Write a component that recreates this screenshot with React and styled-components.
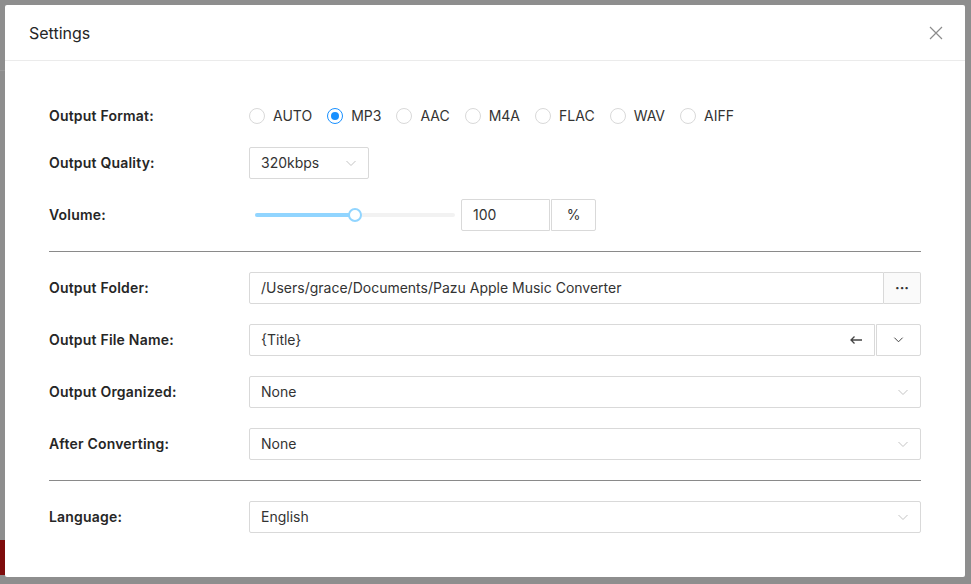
import React from "react";
import styled, { createGlobalStyle } from "styled-components";

const Global = createGlobalStyle`
  html, body { margin: 0; padding: 0; }
  body { font-family: Inter, "Noto Sans", "Liberation Sans", sans-serif; background: #8e8e8e; }
  * { box-sizing: border-box; }
`;

const Backdrop = styled.div`
  width: 971px;
  height: 584px;
  padding: 5px 0 0 5px;
  background:
    linear-gradient(#7e0c0c, #7e0c0c) 0 540px / 5px 35px no-repeat,
    linear-gradient(#999, #999) 0 70px / 5px 1px no-repeat,
    #8e8e8e;
  overflow: hidden;
`;

const Modal = styled.div`
  width: 960px;
  height: 572px;
  background: #fff;
  border-radius: 2px;
  display: flex;
  flex-direction: column;
`;

const Header = styled.div`
  height: 56px;
  flex: none;
  display: flex;
  align-items: center;
  justify-content: space-between;
  padding: 0 20px 0 24px;
  border-bottom: 1px solid #ebebeb;
`;

const Title = styled.div`
  font-size: 16px;
  color: #262626;
  font-weight: 400;
`;

const Close = styled.button`
  border: 0;
  background: none;
  padding: 0;
  width: 18px;
  height: 18px;
  display: flex;
  align-items: center;
  justify-content: center;
  cursor: pointer;
`;

const Body = styled.div`
  padding: 39px 44px 0 44px;
  display: flex;
  flex-direction: column;
`;

const Row = styled.div`
  display: grid;
  grid-template-columns: 200px 1fr;
  align-items: center;
  min-height: 32px;
  margin-bottom: ${(p) => (p.$gap != null ? p.$gap : 20)}px;
`;

const Label = styled.div`
  font-size: 14px;
  font-weight: 600;
  letter-spacing: 0.2px;
  color: #262626;
  line-height: 20px;
  padding-bottom: 1px;
`;

const Control = styled.div`
  display: flex;
  align-items: center;
`;

const RadioGroup = styled.div`
  display: flex;
  align-items: center;
  padding-bottom: 1px;
`;

const RadioItem = styled.label`
  display: flex;
  align-items: center;
  margin-right: 15px;
  font-size: 14px;
  color: #333;
  cursor: pointer;
`;

const RadioCircle = styled.span`
  width: 16px;
  height: 16px;
  border-radius: 50%;
  border: 1px solid ${(p) => (p.$checked ? "#1890ff" : "#d9d9d9")};
  display: flex;
  align-items: center;
  justify-content: center;
  margin-right: 8px;
  &::after {
    content: "";
    width: 8px;
    height: 8px;
    border-radius: 50%;
    background: ${(p) => (p.$checked ? "#1890ff" : "transparent")};
  }
`;

const SelectBox = styled.div`
  width: ${(p) => p.$width || "100%"};
  height: 32px;
  border: 1px solid #d9d9d9;
  border-radius: 2px;
  display: flex;
  align-items: center;
  justify-content: space-between;
  padding: 0 11px 1px;
  font-size: 14px;
  color: #333;
  background: #fff;
`;

const SliderWrap = styled.div`
  width: 212px;
  height: 32px;
  padding: 0 6px;
  display: flex;
  align-items: center;
`;

const Rail = styled.div`
  position: relative;
  width: 200px;
  height: 4px;
  border-radius: 2px;
  background: #f2f2f2;
`;

const Track = styled.div`
  height: 4px;
  border-radius: 2px;
  background: #91d5ff;
`;

const Handle = styled.div`
  position: absolute;
  top: -5px;
  width: 14px;
  height: 14px;
  margin-left: -7px;
  border-radius: 50%;
  background: #fff;
  border: 2px solid #91d5ff;
`;

const InputGroup = styled.div`
  display: flex;
  align-items: stretch;
  height: 32px;
  width: ${(p) => p.$width || "100%"};
`;

const Input = styled.div`
  flex: 1;
  border: 1px solid #d9d9d9;
  border-radius: 2px 0 0 2px;
  display: flex;
  align-items: center;
  justify-content: space-between;
  padding: 0 11px 1px;
  font-size: 14px;
  color: #333;
`;

const Addon = styled.div`
  width: ${(p) => p.$w}px;
  flex: none;
  border: 1px solid #d9d9d9;
  border-left: ${(p) => (p.$joined ? "0" : "1px solid #d9d9d9")};
  margin-left: ${(p) => (p.$joined ? 0 : 1)}px;
  border-radius: 0 2px 2px 0;
  background: ${(p) => p.$bg || "#fff"};
  display: flex;
  align-items: center;
  justify-content: center;
  padding-bottom: 1px;
  font-size: 14px;
  color: #333;
  font-weight: ${(p) => (p.$bold ? 700 : 400)};
`;

const Divider = styled.div`
  height: 1px;
  background: #8a8a8a;
  margin-bottom: 20px;
`;

const Chevron = ({ color = "#c4c4c4", size = 12 }) => (
  <svg width={size} height={size} viewBox="0 0 12 12" fill="none">
    <path d="M1.5 4 L6 8.5 L10.5 4" stroke={color} strokeWidth="1" />
  </svg>
);

const formats = ["AUTO", "MP3", "AAC", "M4A", "FLAC", "WAV", "AIFF"];

export default function App() {
  return (
    <Backdrop>
      <Global />
      <Modal>
        <Header>
          <Title>Settings</Title>
          <Close aria-label="close">
            <svg width="14" height="14" viewBox="0 0 14 14">
              <path d="M1 1 L13 13 M13 1 L1 13" stroke="#8c8c8c" strokeWidth="1.2" />
            </svg>
          </Close>
        </Header>
        <Body>
          <Row $gap={15}>
            <Label>Output Format:</Label>
            <Control>
              <RadioGroup>
                {formats.map((f) => (
                  <RadioItem key={f}>
                    <RadioCircle $checked={f === "MP3"} />
                    {f}
                  </RadioItem>
                ))}
              </RadioGroup>
            </Control>
          </Row>
          <Row>
            <Label>Output Quality:</Label>
            <Control>
              <SelectBox $width="120px">
                320kbps
                <Chevron />
              </SelectBox>
            </Control>
          </Row>
          <Row>
            <Label>Volume:</Label>
            <Control>
              <SliderWrap>
                <Rail>
                  <Track style={{ width: "50%" }} />
                  <Handle style={{ left: "50%" }} />
                </Rail>
              </SliderWrap>
              <InputGroup $width="135px">
                <Input>100</Input>
                <Addon $w={45}>%</Addon>
              </InputGroup>
            </Control>
          </Row>
          <Divider />
          <Row>
            <Label>Output Folder:</Label>
            <Control>
              <InputGroup>
                <Input>/Users/grace/Documents/Pazu Apple Music Converter</Input>
                <Addon $w={37} $bg="#fafafa" $joined $bold>···</Addon>
              </InputGroup>
            </Control>
          </Row>
          <Row>
            <Label>Output File Name:</Label>
            <Control>
              <InputGroup>
                <Input>
                  {"{Title}"}
                  <svg width="14" height="10" viewBox="0 0 14 10">
                    <path d="M13 5 H2 M5.5 1.5 L2 5 L5.5 8.5" stroke="#444" strokeWidth="1.3" fill="none" />
                  </svg>
                </Input>
                <Addon $w={45}>
                  <Chevron color="#333" size={11} />
                </Addon>
              </InputGroup>
            </Control>
          </Row>
          <Row>
            <Label>Output Organized:</Label>
            <Control>
              <SelectBox>
                None
                <Chevron />
              </SelectBox>
            </Control>
          </Row>
          <Row>
            <Label>After Converting:</Label>
            <Control>
              <SelectBox>
                None
                <Chevron />
              </SelectBox>
            </Control>
          </Row>
          <Divider />
          <Row>
            <Label>Language:</Label>
            <Control>
              <SelectBox>
                English
                <Chevron />
              </SelectBox>
            </Control>
          </Row>
        </Body>
      </Modal>
    </Backdrop>
  );
}
